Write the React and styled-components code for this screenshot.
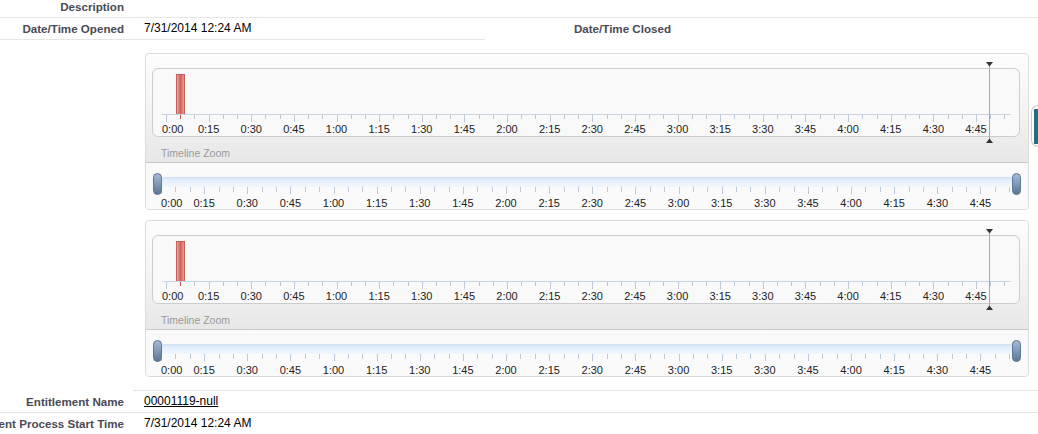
import React from 'react';
import styled, { createGlobalStyle } from 'styled-components';

const GlobalStyle = createGlobalStyle`
  html, body {
    margin: 0;
    padding: 0;
    background: #fff;
    overflow: hidden;
  }
  body {
    font-family: "Liberation Sans", Arial, sans-serif;
  }
`;

const Page = styled.div`
  position: relative;
  width: 1038px;
  height: 434px;
  overflow: hidden;
`;

const DetailGrid = styled.div`
  display: grid;
  grid-template-columns: 133px 352px 195px 1fr;
  margin-top: -4px;
`;

const LabelCell = styled.div`
  display: flex;
  justify-content: flex-end;
  padding: 3px 9px 3px 0;
  font-size: 11.6px;
  font-weight: bold;
  line-height: 15px;
  color: #4a4a56;
  white-space: nowrap;
  border-bottom: 1px solid ${(p) => (p.$lined ? '#e6e6e6' : 'transparent')};
`;

const DataCell = styled.div`
  grid-column: span ${(p) => p.$span || 1};
  padding: 3px 0 3px 11px;
  font-size: 12px;
  line-height: 15px;
  color: #000;
  white-space: nowrap;
  border-bottom: 1px solid ${(p) => (p.$lined ? '#e6e6e6' : 'transparent')};
`;

const RecordLink = styled.a`
  color: #000;
  text-decoration: underline;
`;

const TimelineCell = styled.div`
  grid-column: span 3;
  display: flex;
  flex-direction: column;
  gap: 10px;
  padding: 13px 9px 13px 12px;
  border-bottom: 1px solid #e6e6e6;
`;

const Panel = styled.div`
  border: 1px solid #dcdcdc;
  border-radius: 4px;
  overflow: visible;
`;

const PanelTop = styled.div`
  background: linear-gradient(to bottom, #fdfdfd 0%, #f3f3f3 55%, #e7e7e7 100%);
  border-radius: 4px 4px 0 0;
`;

const ChartArea = styled.div`
  padding: 14px 8px 0 6px;
`;

const ChartBox = styled.div`
  position: relative;
  height: 67px;
  border: 1px solid #cdcdcd;
  border-radius: 6px;
  background: #f9f9f9;

  svg {
    display: block;
  }
`;

const MarkerLayer = styled.svg`
  position: absolute;
  left: 831px;
  top: -7px;
`;

const ZoomLabel = styled.div`
  height: 25px;
  box-sizing: border-box;
  padding: 9px 0 0 15px;
  font-size: 10.5px;
  line-height: 14px;
  color: #9a9a9a;
`;

const SliderArea = styled.div`
  border-top: 1px solid #c9c9c9;
  background: #fafafa;
  border-radius: 0 0 4px 4px;

  svg {
    display: block;
  }
`;

const SideTab = styled.div`
  position: absolute;
  left: 1031px;
  top: 105px;
  width: 7px;
  height: 42px;
  box-sizing: border-box;
  border: 1px solid #c8c8c8;
  border-right: none;
  border-radius: 7px 0 0 7px;
  background: #fff;
`;

const SideTabBar = styled.div`
  position: absolute;
  left: 2px;
  right: 0;
  top: 3px;
  bottom: 2px;
  background: #256c8b;
`;

const fmt = (i) => `${Math.floor(i / 4)}:${String((i % 4) * 15).padStart(2, '0')}`;
const ticks = Array.from({ length: 60 }, (_, i) => i);
const labels = Array.from({ length: 20 }, (_, i) => i);
const snap = (x) => Math.round(x) + 0.5;

// top chart: svg origin sits inside the box border
const ChartAxis = ({ id }) => {
  const x0 = 13;
  const step = 42.63 / 3;
  return (
    <svg width="866" height="67">
      <defs>
        <linearGradient id={`${id}-bar`} x1="0" x2="1" y1="0" y2="0">
          <stop offset="0" stopColor="#eab0aa" />
          <stop offset="0.5" stopColor="#cf615b" />
          <stop offset="1" stopColor="#e8a49e" />
        </linearGradient>
      </defs>
      <rect x="23.5" y="5.5" width="8" height="40" fill={`url(#${id}-bar)`} stroke="#c5605c" />
      <line x1="9" x2="858" y1="45.5" y2="45.5" stroke="#c9d5e2" />
      {ticks.map((i) => (
        <line
          key={i}
          x1={snap(x0 + i * step)}
          x2={snap(x0 + i * step)}
          y1="46"
          y2={i % 3 === 0 ? 53 : 50}
          stroke={i === 1 ? '#c0504d' : '#bcc8d6'}
        />
      ))}
      {labels.map((i) => (
        <text
          key={i}
          x={i === 0 ? x0 - 4 : x0 + i * step * 3}
          y="64"
          textAnchor={i === 0 ? 'start' : 'middle'}
          fontFamily='"Liberation Sans", Arial, sans-serif'
          fontSize="11"
          fill="#222"
        >
          {fmt(i)}
        </text>
      ))}
    </svg>
  );
};

const SliderAxis = ({ id }) => {
  const x0 = 15;
  const step = 43.13 / 3;
  return (
    <svg width="881" height="46">
      <defs>
        <linearGradient id={`${id}-track`} x1="0" x2="0" y1="0" y2="1">
          <stop offset="0" stopColor="#d0e1f6" />
          <stop offset="0.3" stopColor="#e3eefb" />
          <stop offset="1" stopColor="#f1f7fd" />
        </linearGradient>
        <linearGradient id={`${id}-knob`} x1="0" x2="0" y1="0" y2="1">
          <stop offset="0" stopColor="#a9bdd4" />
          <stop offset="0.5" stopColor="#8099b6" />
          <stop offset="1" stopColor="#587593" />
        </linearGradient>
      </defs>
      <rect x="11" y="14" width="858" height="10" fill={`url(#${id}-track)`} />
      {ticks.map((i) => (
        <line
          key={i}
          x1={snap(x0 + i * step)}
          x2={snap(x0 + i * step)}
          y1="24"
          y2={i % 3 === 0 ? 31 : 29}
          stroke="#bcc8d6"
        />
      ))}
      {labels.map((i) => (
        <text
          key={i}
          x={i === 0 ? x0 : x0 + i * step * 3}
          y="44"
          textAnchor={i === 0 ? 'start' : 'middle'}
          fontFamily='"Liberation Sans", Arial, sans-serif'
          fontSize="11"
          fill="#222"
        >
          {fmt(i)}
        </text>
      ))}
      <rect x="7.5" y="10.5" width="8" height="21" rx="4" fill={`url(#${id}-knob)`} stroke="#5d7896" />
      <rect x="866.5" y="10.5" width="8" height="21" rx="4" fill={`url(#${id}-knob)`} stroke="#5d7896" />
    </svg>
  );
};

const Timeline = ({ id }) => (
  <Panel>
    <PanelTop>
      <ChartArea>
        <ChartBox>
          <ChartAxis id={id} />
          <MarkerLayer width="11" height="81">
            <line x1="5.5" x2="5.5" y1="4" y2="77" stroke="#a9a9a9" />
            <polygon points="2,0 9,0 5.5,4.5" fill="#333" />
            <polygon points="2,81 9,81 5.5,76.5" fill="#333" />
          </MarkerLayer>
        </ChartBox>
      </ChartArea>
      <ZoomLabel>Timeline Zoom</ZoomLabel>
    </PanelTop>
    <SliderArea>
      <SliderAxis id={id} />
    </SliderArea>
  </Panel>
);

const App = () => (
  <Page>
    <GlobalStyle />
    <DetailGrid>
      <LabelCell $lined>Description</LabelCell>
      <DataCell $span={3} $lined />

      <LabelCell $lined>Date/Time Opened</LabelCell>
      <DataCell $lined>7/31/2014 12:24 AM</DataCell>
      <LabelCell>Date/Time Closed</LabelCell>
      <DataCell />

      <LabelCell />
      <TimelineCell>
        <Timeline id="tl1" />
        <Timeline id="tl2" />
      </TimelineCell>

      <LabelCell $lined>Entitlement Name</LabelCell>
      <DataCell $span={3} $lined>
        <RecordLink href="#">00001119-null</RecordLink>
      </DataCell>

      <LabelCell>Entitlement Process Start Time</LabelCell>
      <DataCell $span={3}>7/31/2014 12:24 AM</DataCell>
    </DetailGrid>
    <SideTab>
      <SideTabBar />
    </SideTab>
  </Page>
);

export default App;
